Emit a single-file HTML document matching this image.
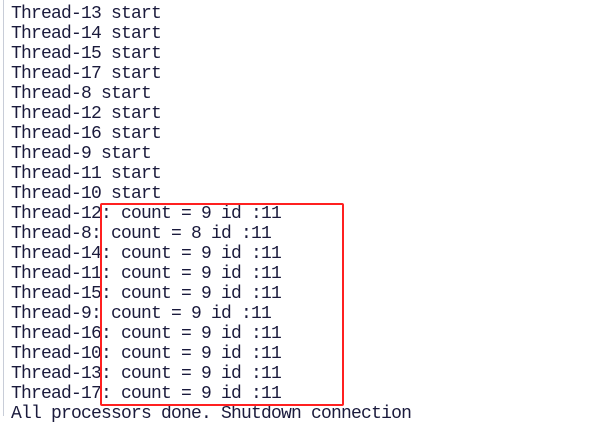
<!DOCTYPE html>
<html><head><meta charset="utf-8"><style>
html,body{margin:0;padding:0;width:613px;height:416px;overflow:hidden;background:#fff;}
.border{position:absolute;left:3px;top:0;width:1px;height:416px;background:#c8cdd8;}
pre{position:absolute;left:11px;top:4px;margin:0;font-family:"Liberation Mono",monospace;font-size:18px;line-height:20px;color:#1a1a3c;letter-spacing:-0.8px;}
.box{position:absolute;left:100px;top:203px;width:240px;height:199px;border:2px solid #ff2020;border-radius:2px;}
</style></head><body>
<div class="border"></div>
<pre>Thread-13 start
Thread-14 start
Thread-15 start
Thread-17 start
Thread-8 start
Thread-12 start
Thread-16 start
Thread-9 start
Thread-11 start
Thread-10 start
Thread-12: count = 9 id :11
Thread-8: count = 8 id :11
Thread-14: count = 9 id :11
Thread-11: count = 9 id :11
Thread-15: count = 9 id :11
Thread-9: count = 9 id :11
Thread-16: count = 9 id :11
Thread-10: count = 9 id :11
Thread-13: count = 9 id :11
Thread-17: count = 9 id :11
All processors done. Shutdown connection</pre>
<div class="box"></div>
</body></html>
